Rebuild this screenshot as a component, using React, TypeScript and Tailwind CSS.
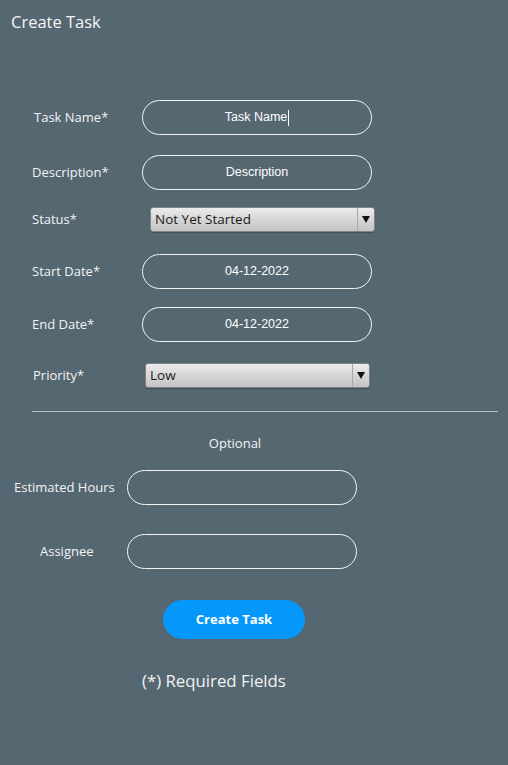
import React from "react";

const labelFont = { fontFamily: '"Open Sans", "Noto Sans", sans-serif' };

function Pill({ text, cursor }: { text?: string; cursor?: boolean }) {
  return (
    <div className="w-[230px] h-[35px] rounded-full border-[1.5px] border-[#f4f4f4] flex items-center justify-center text-[12.5px] text-white [font-family:'Liberation_Sans',Arial,sans-serif]">
      {text && <span>{text}</span>}
      {cursor && <span className="inline-block w-px h-[16px] bg-white ml-px" />}
    </div>
  );
}

function Select({ text, width }: { text: string; width: number }) {
  return (
    <div
      className="h-[25px] rounded-[3px] border border-[#7d8589] bg-gradient-to-b from-[#ececec] via-[#d6d6d6] to-[#c4c4c4] flex items-stretch shadow-[0_1px_1px_rgba(0,0,0,0.25)]"
      style={{ width }}
    >
      <div className="flex-1 flex items-center pl-[4px] text-[13.5px] text-[#1a1a1a] [font-family:'Open_Sans','Noto_Sans',sans-serif]">
        {text}
      </div>
      <div className="w-[17px] border-l border-[#a9a9a9] flex items-center justify-center">
        <svg width="8" height="7" viewBox="0 0 8 7">
          <polygon points="0,0 8,0 4,7" fill="#111" />
        </svg>
      </div>
    </div>
  );
}

function Label({ children, w, pl }: { children: React.ReactNode; w: number; pl: number }) {
  return (
    <div className="text-[13px] text-[#f3f3f3] shrink-0" style={{ ...labelFont, width: w, paddingLeft: pl }}>
      {children}
    </div>
  );
}

export default function App() {
  return (
    <div className="w-[508px] h-[765px] bg-[#556771] relative overflow-hidden" style={labelFont}>
      <div className="pt-[10px] pl-[11px] text-[16.5px] text-[#f5f5f5] leading-[24px]">Create Task</div>

      <div className="flex items-center mt-[66px] h-[35px]">
        <Label w={142} pl={34}>Task Name*</Label>
        <Pill text="Task Name" cursor />
      </div>

      <div className="flex items-center mt-[20px] h-[35px]">
        <Label w={142} pl={32}>Description*</Label>
        <Pill text="Description" />
      </div>

      <div className="flex items-center mt-[17px] h-[25px]">
        <Label w={150} pl={32}>Status*</Label>
        <Select text="Not Yet Started" width={225} />
      </div>

      <div className="flex items-center mt-[22px] h-[35px]">
        <Label w={142} pl={32}>Start Date*</Label>
        <Pill text="04-12-2022" />
      </div>

      <div className="flex items-center mt-[18px] h-[35px]">
        <Label w={142} pl={32}>End Date*</Label>
        <Pill text="04-12-2022" />
      </div>

      <div className="flex items-center mt-[21px] h-[25px]">
        <Label w={145} pl={33}>Priority*</Label>
        <Select text="Low" width={225} />
      </div>

      <div className="ml-[32px] w-[466px] h-px bg-[#b9c0c4] mt-[23px]" />

      <div className="mt-[21px] w-[470px] text-center text-[13px] text-[#f3f3f3] leading-[20px]">Optional</div>

      <div className="flex items-center mt-[17px] h-[35px]">
        <Label w={127} pl={14}>Estimated Hours</Label>
        <Pill />
      </div>

      <div className="flex items-center mt-[29px] h-[35px]">
        <Label w={127} pl={40}>Assignee</Label>
        <Pill />
      </div>

      <div className="mt-[31px] ml-[163px] w-[142px] h-[39px] rounded-full bg-[#0597f9] flex items-center justify-center text-white text-[13px] font-bold">
        Create Task
      </div>

      <div className="mt-[31px] ml-[142px] text-[16.8px] text-[#f3f3f3] leading-[22px]">(*) Required Fields</div>
    </div>
  );
}
